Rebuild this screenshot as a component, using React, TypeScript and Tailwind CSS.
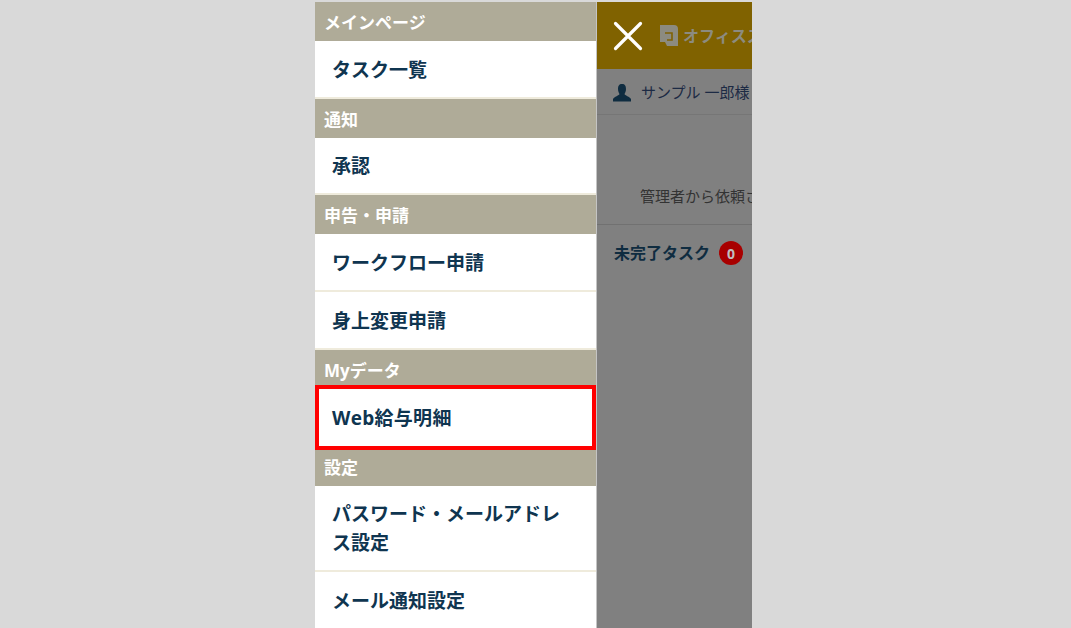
const font = { fontFamily: '"Open Sans", "Noto Sans CJK JP", sans-serif' };

const SectionHead = ({ label, className }: { label: string; className: string }) => (
  <div className={`flex shrink-0 items-center bg-[#afab98] pl-[9px] text-[17px] leading-[20px] font-bold text-white ${className}`}>
    {label}
  </div>
);

const MenuItem = ({ label, className }: { label: string; className: string }) => (
  <div className={`flex shrink-0 items-center border-b-2 border-[#efebdc] bg-white pt-[2px] pr-[22px] pl-[17px] text-[19px] leading-[29px] font-bold text-[#0f3550] ${className}`}>
    {label}
  </div>
);

const Sidebar = () => (
  <div className="flex w-[282px] shrink-0 flex-col border-r border-[#c4c4c4]">
    <SectionHead label="メインページ" className="h-[39px] pt-[2px]" />
    <MenuItem label="タスク一覧" className="h-[58px]" />
    <SectionHead label="通知" className="h-[39px] pt-[2px]" />
    <MenuItem label="承認" className="h-[57px]" />
    <SectionHead label="申告・申請" className="h-[39px] pt-[2px]" />
    <MenuItem label="ワークフロー申請" className="h-[58px]" />
    <MenuItem label="身上変更申請" className="h-[58px]" />
    <SectionHead label="Myデータ" className="h-[35px] pt-[6px]" />
    <div className="flex h-[65px] shrink-0 items-center border-4 border-[#ff0000] bg-white pt-[2px] pl-[13px] text-[19px] font-bold tracking-[0.3px] text-[#0f3550]">
      Web給与明細
    </div>
    <SectionHead label="設定" className="h-[36px]" />
    <MenuItem label="パスワード・メールアドレス設定" className="h-[86px]" />
    <MenuItem label="メール通知設定" className="h-[58px]" />
  </div>
);

const MainPane = () => (
  <div className="w-[155px] shrink-0 overflow-hidden bg-[#808080]">
    <div className="flex h-[67px] items-center bg-[#806200] pl-[16px]">
      <svg width="30" height="30" viewBox="0 0 30 30" className="mt-[1px] shrink-0">
        <path d="M2.5 2.5 L27.5 27.5 M27.5 2.5 L2.5 27.5" stroke="#fff" strokeWidth="3.2" strokeLinecap="round" />
      </svg>
      <svg width="18" height="21" viewBox="0 0 18 21" className="ml-[17px] shrink-0">
        <path d="M0 0 H14 Q18 0 18 4 V21 H7 L5 17 H0 Z" fill="#8c8b80" />
        <path d="M5 8 H12 V15 H7" fill="none" stroke="#806200" strokeWidth="1.6" />
      </svg>
      <span className="ml-[5px] text-[16px] font-bold whitespace-nowrap text-[#8c8b80]">オフィスステーション</span>
    </div>
    <div className="flex h-[46px] items-center border-b border-[#767676] pt-[2px] pl-[16px] text-[15px] whitespace-nowrap text-[#1c2a44]">
      <svg width="18" height="18" viewBox="0 0 18 18" className="shrink-0">
        <path d="M9 0 C6 0 5 2 5 5 C5 7.5 6 9 6.5 10 C6.5 11.5 1 12.5 0 15 V17.5 H18 V15 C17 12.5 11.5 11.5 11.5 10 C12 9 13 7.5 13 5 C13 2 12 0 9 0 Z" fill="#0f2c40" />
      </svg>
      <span className="ml-[10px]">サンプル 一郎様</span>
    </div>
    <div className="flex h-[110px] items-end border-b border-[#717171] pb-[17px] pl-[43px] text-[15px] whitespace-nowrap text-[#333333]">
      管理者から依頼されたタスク
    </div>
    <div className="flex h-[56px] items-center pl-[17px]">
      <span className="text-[16px] font-bold whitespace-nowrap text-[#0f2c40]">未完了タスク</span>
      <span className="ml-[9px] flex h-[24px] w-[24px] shrink-0 items-center justify-center rounded-full bg-[#a80000] text-[14px] font-bold text-[#c0c0c0]">
        0
      </span>
    </div>
  </div>
);

export default function App() {
  return (
    <div className="h-[628px] overflow-hidden bg-[#d9d9d9] pt-[2px] pl-[315px]" style={font}>
      <div className="flex h-[626px] w-[437px] overflow-hidden">
        <Sidebar />
        <MainPane />
      </div>
    </div>
  );
}
